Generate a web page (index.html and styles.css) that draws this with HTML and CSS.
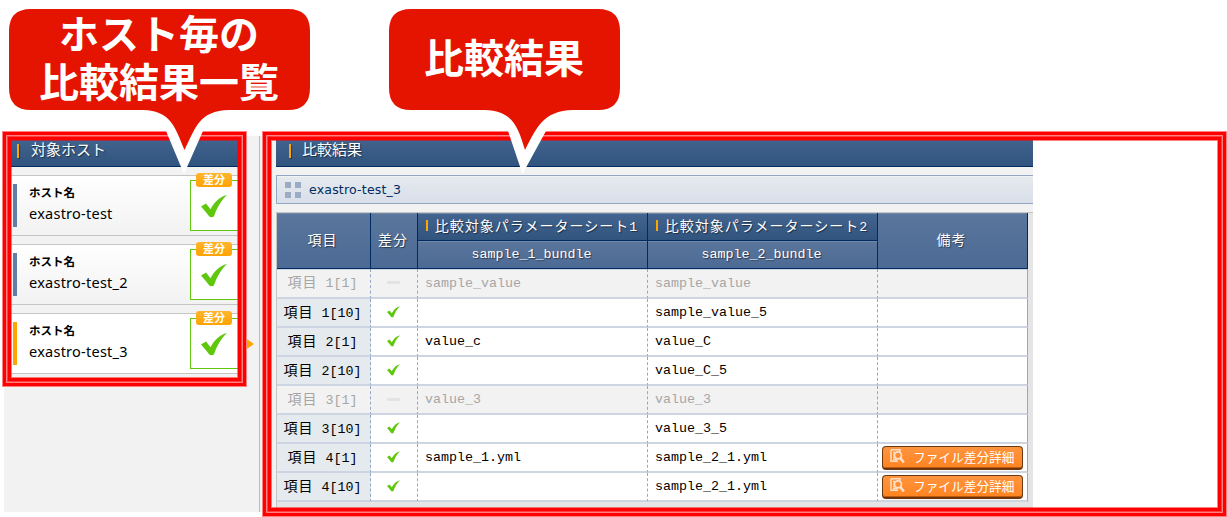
FILE: index.html
```html
<!DOCTYPE html>
<html lang="ja">
<head>
<meta charset="utf-8">
<title>比較結果</title>
<link rel="stylesheet" href="styles.css">
</head>
<body>
<svg class="defs" aria-hidden="true">
  <symbol id="check" viewBox="0 0 26 23"><path d="M0 11.5 5 8.500l4.500 5.700C13 7.500 18.500 1.500 26 0 19.500 6 15.500 14 12.900 21.500Q10.500 23 8.300 21.500 5 17 0 11.500Z"/></symbol>
  <symbol id="detail" viewBox="0 0 15 15"><path d="M1 .7h9v2M1 .7v11.600h7M3 3.500h2M3 6h1.500M3 8.500h2M3 10.500h4" fill="none" stroke="currentColor" stroke-width="1.500"/><circle cx="8" cy="6.300" r="3.500" fill="none" stroke="currentColor" stroke-width="1.700"/><path d="m10.300 9 3.500 4.500" fill="none" stroke="currentColor" stroke-width="2.600"/></symbol>
</svg>

<main class="app">
  <aside class="hosts">
    <h2 class="bar"><span>対象ホスト</span></h2>
    <div class="card">
      <div class="card-text"><b>ホスト名</b><span>exastro-test</span></div>
      <div class="diff"><em>差分</em><svg><use href="#check"/></svg></div>
    </div>
    <div class="card">
      <div class="card-text"><b>ホスト名</b><span>exastro-test_2</span></div>
      <div class="diff"><em>差分</em><svg><use href="#check"/></svg></div>
    </div>
    <div class="card active">
      <div class="card-text"><b>ホスト名</b><span>exastro-test_3</span></div>
      <div class="diff"><em>差分</em><svg><use href="#check"/></svg></div>
    </div>
  </aside>

  <section class="result">
    <h2 class="bar"><span>比較結果</span></h2>
    <div class="host-title"><i class="tiles"></i><span>exastro-test_3</span></div>
    <div class="table-area">
      <table>
        <colgroup><col class="c1"><col class="c2"><col class="c3"><col class="c3"><col class="c5"></colgroup>
        <thead>
          <tr><th rowspan="2"><span class="j">項目</span></th><th rowspan="2"><span class="j">差分</span></th><th class="sheet"><span class="j">比較対象パラメーターシート</span>1</th><th class="sheet"><span class="j">比較対象パラメーターシート</span>2</th><th rowspan="2"><span class="j">備考</span></th></tr>
          <tr><th>sample_1_bundle</th><th>sample_2_bundle</th></tr>
        </thead>
        <tbody>
          <tr class="same"><th><span class="j">項目</span> 1[1]</th><td><i class="dash"></i></td><td>sample_value</td><td>sample_value</td><td></td></tr>
          <tr><th><span class="j">項目</span> 1[10]</th><td><svg><use href="#check"/></svg></td><td></td><td>sample_value_5</td><td></td></tr>
          <tr><th><span class="j">項目</span> 2[1]</th><td><svg><use href="#check"/></svg></td><td>value_c</td><td>value_C</td><td></td></tr>
          <tr><th><span class="j">項目</span> 2[10]</th><td><svg><use href="#check"/></svg></td><td></td><td>value_C_5</td><td></td></tr>
          <tr class="same"><th><span class="j">項目</span> 3[1]</th><td><i class="dash"></i></td><td>value_3</td><td>value_3</td><td></td></tr>
          <tr><th><span class="j">項目</span> 3[10]</th><td><svg><use href="#check"/></svg></td><td></td><td>value_3_5</td><td></td></tr>
          <tr><th><span class="j">項目</span> 4[1]</th><td><svg><use href="#check"/></svg></td><td>sample_1.yml</td><td>sample_2_1.yml</td><td><button><svg><use href="#detail"/></svg>ファイル差分詳細</button></td></tr>
          <tr><th><span class="j">項目</span> 4[10]</th><td><svg><use href="#check"/></svg></td><td></td><td>sample_2_1.yml</td><td><button><svg><use href="#detail"/></svg>ファイル差分詳細</button></td></tr>
        </tbody>
      </table>
    </div>
  </section>
</main>

<div class="frame frame-hosts"></div>
<div class="frame frame-result"></div>

<div class="callout callout-hosts">
  <svg viewBox="0 0 301 166"><path class="edge" d="M128 101 157 122 175 165 194 122 224 101Z"/><path d="M22 0H279Q301 0 301 22V79Q301 101 279 101H220C190 102 187 118 175.500 141C166 118 162 102 134 101H22Q0 101 0 79V22Q0 0 22 0Z"/></svg>
  <p>ホスト毎の<br>比較結果一覧</p>
</div>
<div class="callout callout-result">
  <svg viewBox="0 0 231 166"><path class="edge" d="M90 101 119 122 133.500 165 157 122 190 101Z"/><path d="M22 0H209Q231 0 231 22V79Q231 101 209 101H184C154 102 148 118 136 141C129 118 124 102 96 101H22Q0 101 0 79V22Q0 0 22 0Z"/></svg>
  <p>比較結果</p>
</div>
</body>
</html>
```
FILE: styles.css
```css
* { box-sizing: border-box; }
body {
  margin: 0;
  height: 517px;
  overflow: hidden;
  position: relative;
  background: #fff;
  color: #000;
  font-family: "Noto Sans CJK JP", sans-serif;
}
.defs { display: none; }
.app {
  display: flex;
  width: 1029px;
  height: 376px;
  margin: 136px 0 0 4px;
  background: #f2f2f2;
}
h2, p { margin: 0; }

.bar {
  height: 31px;
  padding-left: 13px;
  display: flex;
  align-items: center;
  color: #fff;
  font-size: 15px;
  font-weight: 400;
  line-height: 28px;
  background: linear-gradient(#436590, #31547f);
  border-bottom: 1px solid #002b62;
  text-shadow: 1px 1px 1px rgba(0, 0, 0, .5);
}
.bar::before {
  content: "";
  width: 2px;
  height: 14px;
  margin-right: 12px;
  background: #ffa500;
  box-shadow: 1px 1px 1px rgba(0, 0, 0, .4);
}
.bar span { position: relative; top: -2px; }
.result .bar::before { margin-right: 11px; }

.hosts {
  width: 256px;
  padding: 0 16px 0 2px;
  border-right: 1px solid #bbb;
}
.hosts .bar { padding-left: 11px; margin-bottom: 8px; }
.card {
  position: relative;
  display: flex;
  height: 61px;
  margin-bottom: 8px;
  padding-left: 7px;
  align-items: center;
  background: linear-gradient(#fff, #f2f2f2);
  border: 1px solid #c5c5c5;
  border-left: 0;
}
.card::before {
  content: "";
  width: 4px;
  height: 43px;
  margin-right: 12px;
  background: #617fa6;
}
.card-text { flex: 1; }
.card-text b { display: block; font-size: 11.500px; line-height: 17px; margin-top: -1px; }
.card-text span { display: block; font: 14.500px/25px "Noto Sans", sans-serif; letter-spacing: .25px; }
.diff {
  position: relative;
  width: 52px;
  height: 51px;
  border: 1px solid #5fc80c;
  border-right: 0;
  background: #fff;
}
.diff em {
  position: absolute;
  left: 5px;
  top: -8px;
  width: 36px;
  height: 14px;
  border-radius: 3px;
  background: linear-gradient(#ffb52e, #ffa200);
  color: #fff;
  font: 700 11px/13px "Noto Sans CJK JP", sans-serif;
  text-align: center;
}
.diff svg { position: absolute; left: 10px; top: 14px; width: 26px; height: 23px; fill: #5fc80c; }
.card.active { background: #fff; }
.card.active::before { background: #ffa500; }
.card.active::after {
  content: "";
  position: absolute;
  right: -12px;
  top: 23px;
  border: 7px solid transparent;
  border-left: 10px solid #ffa500;
  border-right: 0;
}

.result { width: 773px; padding-left: 16px; }
.host-title {
  height: 29px;
  margin: 8px 0;
  padding-left: 8px;
  display: flex;
  align-items: center;
  gap: 8px;
  border: 1px solid #95a8c3;
  border-right: 0;
  background: linear-gradient(#e5eaee, #d9dfea);
  box-shadow: inset 0 1px #f0f3f6;
  color: #002b62;
  font: 13px/26px "DejaVu Sans", sans-serif;
}
.host-title span { font-size: 12.500px; letter-spacing: .2px; }
.tiles {
  width: 16px;
  height: 16px;
  background:
    linear-gradient(#9aabc3, #9aabc3) 0 0 / 6px 6px no-repeat,
    linear-gradient(#9aabc3, #9aabc3) 10px 0 / 6px 6px no-repeat,
    linear-gradient(#9aabc3, #9aabc3) 0 10px / 6px 6px no-repeat,
    linear-gradient(#9aabc3, #9aabc3) 10px 10px / 6px 6px no-repeat;
}
.table-area {
  height: 300px;
  background: #e5e5e5;
  border: 1px solid #c5c5c5;
  border-width: 1px 0 0 1px;
}
table {
  width: 751px;
  table-layout: fixed;
  border-collapse: separate;
  border-spacing: 0;
  font: 13.333px/20px "Liberation Mono", "Noto Sans CJK JP", monospace;
}
.j { font: 14px/20px "Noto Sans CJK JP", sans-serif; letter-spacing: 1px; }
.c1 { width: 94px; }
.c2 { width: 47px; }
.c3 { width: 230px; }
.c5 { width: 150px; }
th, td { padding: 0; font-weight: 400; white-space: pre; }
thead th {
  height: 28px;
  padding-right: 2px;
  color: #fff;
  background: linear-gradient(#5a769c, #4b6a94);
  border: 1px solid #002b62;
  border-width: 0 1px 1px 0;
  box-shadow: inset 0 1px #7188a8;
  text-shadow: 1px 1px 1px rgba(0, 0, 0, .5);
}
thead .sheet { background: linear-gradient(#436590, #31547f); }
.sheet::before {
  content: "";
  display: inline-block;
  width: 2px;
  height: 11px;
  margin-right: 7px;
  background: #ffa500;
}
tbody th, tbody td {
  height: 29px;
  padding-top: 1px;
  background: #fff;
  border-bottom: 2px solid #ccd5e1;
  border-right: 1px dashed #95a8c3;
}
tbody tr:first-child > * { height: 30px; box-shadow: inset 0 1px #ccd5e1; }
tbody th { padding: 0 2px 1px 0; background: #e5eaee; }
tbody td { padding-left: 7px; }
tbody td:nth-child(2) { padding: 0 1px 1px 0; text-align: center; }
tbody td:last-child { padding: 0 0 0 4px; border-right-style: solid; }
td svg { display: block; width: 13px; height: 12px; margin: 0 auto; fill: #5fc80c; }
.same th, .same td { color: #a6a6a6; background: #f2f2f2; }
.dash { display: block; width: 13px; height: 3px; margin: 0 auto; border-radius: 1px; background: #e3e3e3; }
button {
  display: flex;
  align-items: center;
  width: 141px;
  height: 24px;
  padding: 0 0 2px 7px;
  border: 1px solid #6b3a12;
  border-bottom: 2px solid #70340a;
  border-radius: 4px;
  background: linear-gradient(#ff943f, #ff8420);
  box-shadow: inset 0 -1px #b85a10;
  color: #fff;
  font: 12.700px/19px "Noto Sans CJK JP", sans-serif;
}
button svg { width: 15px; height: 15px; margin: 0 8px 0 0; color: #ffe0c8; }

.frame {
  position: absolute;
  top: 131px;
  box-shadow: inset 0 0 0 1px #ff8080, inset 0 0 0 4px #f00, inset 0 0 0 5px #ff8080, inset 0 0 0 6px #ff4040, inset 0 0 0 9px #f00, inset 0 0 0 10px rgba(255, 0, 0, .5);
}
.frame-hosts { left: 2px; width: 245px; height: 256px; }
.frame-result { left: 262px; width: 965px; height: 386px; }

.callout { position: absolute; top: 9px; height: 166px; }
.callout svg { position: absolute; inset: 0; width: 100%; height: 100%; fill: #e51400; }
.callout .edge { fill: #fff; }
.callout p {
  position: relative;
  height: 101px;
  color: #fff;
  font-size: 40px;
  font-weight: 700;
  line-height: 48px;
  text-align: center;
}
.callout-hosts { left: 9px; width: 301px; }
.callout-hosts p { margin: -1px 1px 0 0; }
.callout-result { left: 389px; width: 231px; }
.callout-result p { padding: 23px 1px 0 0; }
```
